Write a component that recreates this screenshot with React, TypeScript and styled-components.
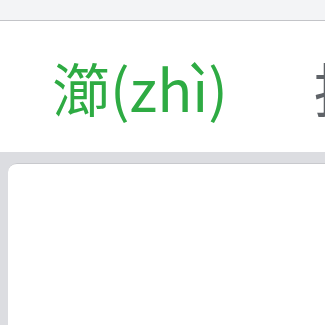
import styled, { createGlobalStyle } from "styled-components";

const Global = createGlobalStyle`
  html, body { margin: 0; padding: 0; background: #dcdde1; }
  body { font-family: "Noto Sans", "Noto Sans CJK SC", sans-serif; overflow: hidden; }
`;

const Page = styled.div`
  width: 325px;
  height: 325px;
  display: flex;
  flex-direction: column;
  overflow: hidden;
`;

const TopBar = styled.div`
  height: 20px;
  background: #f3f4f6;
  border-bottom: 1px solid #c3c4c8;
  flex-shrink: 0;
`;

const TabRow = styled.div`
  height: 131px;
  background: #ffffff;
  display: flex;
  align-items: center;
  padding-left: 52px;
  gap: 86px;
  flex-shrink: 0;
  white-space: nowrap;
  overflow: hidden;
`;

const Tab = styled.div<{ $active?: boolean }>`
  font-family: "Noto Sans CJK SC", "Noto Sans", sans-serif;
  font-size: 58px;
  line-height: 1;
  flex-shrink: 0;
  color: ${({ $active }) => ($active ? "#2eab43" : "#5f6368")};
`;

const Body = styled.div`
  flex: 1;
  background: #dcdde1;
  padding: 11px 0 0 8px;
  display: flex;
`;

const Card = styled.div`
  flex: 1;
  background: #ffffff;
  border-top: 1px solid #c8c9cd;
  border-top-left-radius: 9px;
`;

export default function App() {
  return (
    <Page>
      <Global />
      <TopBar />
      <TabRow>
        <Tab $active>瀄(zhì)</Tab>
        <Tab>损</Tab>
      </TabRow>
      <Body>
        <Card />
      </Body>
    </Page>
  );
}
